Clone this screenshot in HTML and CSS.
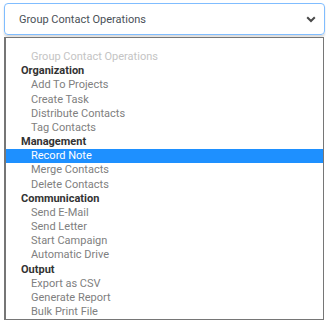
FILE: index.html
```html
<!DOCTYPE html>
<html lang="en">
<head>
    <meta charset="UTF-8">
    <meta name="viewport" content="width=device-width, initial-scale=1.0">
    <title>Group Contact Operations</title>
    <link rel="stylesheet" href="styles.css">
</head>
<body>
    <div class="picker">
        <div class="select-box">
            <span class="select-value">Group Contact Operations</span>
            <svg class="chevron" width="10" height="7" viewBox="0 0 10 7">
                <path d="M1.2 1.2 L5 5 L8.8 1.2" fill="none" stroke="#4a4a4a" stroke-width="2"/>
            </svg>
        </div>

        <ul class="options">
            <li class="option disabled">Group Contact Operations</li>
            <li class="group">Organization</li>
            <li class="option">Add To Projects</li>
            <li class="option">Create Task</li>
            <li class="option">Distribute Contacts</li>
            <li class="option">Tag Contacts</li>
            <li class="group">Management</li>
            <li class="option selected">Record Note</li>
            <li class="option">Merge Contacts</li>
            <li class="option">Delete Contacts</li>
            <li class="group">Communication</li>
            <li class="option">Send E-Mail</li>
            <li class="option">Send Letter</li>
            <li class="option">Start Campaign</li>
            <li class="option">Automatic Drive</li>
            <li class="group">Output</li>
            <li class="option">Export as CSV</li>
            <li class="option">Generate Report</li>
            <li class="option">Bulk Print File</li>
        </ul>
    </div>
</body>
</html>
```

FILE: styles.css
```css
body {
    margin: 0;
    background-color: #ffffff;
    font-family: Roboto, "Liberation Sans", Arial, sans-serif;
}
.picker {
    padding: 3px 1px 0 4px;
}
.select-box {
    height: 30px;
    border: 1px solid #80bdff;
    border-radius: 4px;
    display: flex;
    align-items: center;
    justify-content: space-between;
    padding: 0 8px 0 14px;
    box-shadow: 0 2px 2px rgba(0, 0, 0, 0.15);
    color: #495057;
    font-size: 11px;
}
.chevron {
    display: block;
}
.options {
    list-style: none;
    margin: 2px 1px 0 0;
    padding: 12px 0 0 0;
    border: 1px solid #767676;
    border-left-width: 2px;
    height: 269px;
    font-size: 11px;
    line-height: 14.17px;
}
.group {
    padding-left: 15px;
    font-weight: bold;
    color: #333333;
}
.option {
    padding-left: 25px;
    color: #808080;
}
.option.disabled {
    color: #c4c4c4;
}
.option.selected {
    background-color: #1e90ff;
    color: #ffffff;
}
```
